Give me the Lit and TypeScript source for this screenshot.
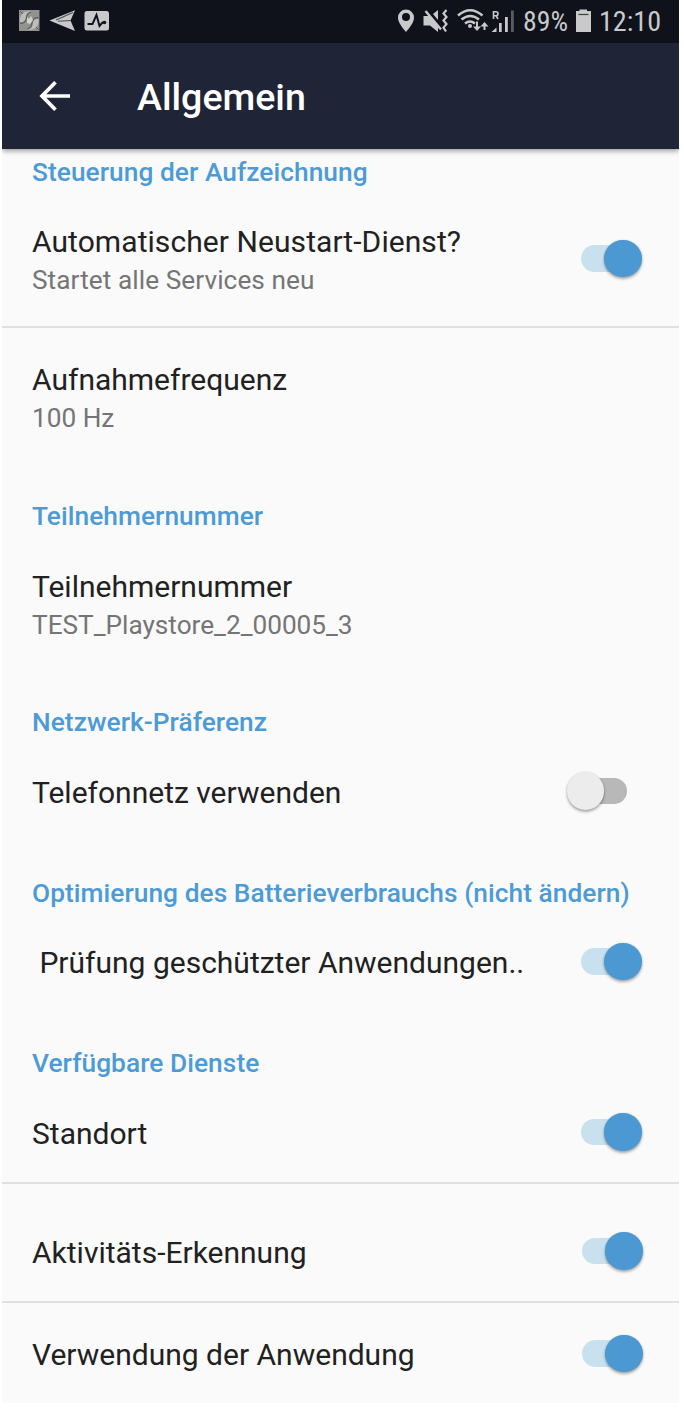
import { LitElement, html, css, svg, nothing } from 'lit';
import { customElement, property } from 'lit/decorators.js';

@customElement('toggle-switch')
class ToggleSwitch extends LitElement {
  @property({ type: Boolean, reflect: true }) on = false;
  static styles = css`
    :host { display: flex; align-items: center; flex: none; height: 38px; }
    .track { width: 46px; height: 26.6px; border-radius: 14px; background: #c9e1ef; }
    .thumb { width: 37.6px; height: 37.6px; border-radius: 50%; background: #4b98d2; margin-left: -23px;
      box-shadow: 0 2px 3px rgba(0,0,0,.32), 0 0 2px rgba(0,0,0,.12); z-index: 1; }
    :host(:not([on])) { flex-direction: row-reverse; margin-right: 14.5px; }
    :host(:not([on])) .track { background: #b8b8b8; }
    :host(:not([on])) .thumb { background: #ececec; margin: 0 -23px 0 0; }
  `;
  render() {
    return html`<div class="track"></div><div class="thumb"></div>`;
  }
}

@customElement('pref-row')
class PrefRow extends LitElement {
  @property() label = '';
  @property() summary = '';
  @property() toggle = '';
  static styles = css`
    :host { display: flex; align-items: center; justify-content: space-between; box-sizing: border-box;
      height: 94px; padding: 0 37.3px 0 30px; }
    .title { font-size: 30px; line-height: 38px; color: #212121; white-space: pre; }
    .summary { font-size: 26.2px; line-height: 38px; color: #757575; white-space: pre; }
    toggle-switch { margin-bottom: 3px; }
    .text:has(.summary) + toggle-switch { margin-bottom: 5px; }
  `;
  render() {
    return html`
      <div class="text">
        <div class="title">${this.label}</div>
        ${this.summary ? html`<div class="summary">${this.summary}</div>` : nothing}
      </div>
      ${this.toggle ? html`<toggle-switch ?on=${this.toggle === 'on'}></toggle-switch>` : nothing}
    `;
  }
}

@customElement('status-bar')
class StatusBar extends LitElement {
  static styles = css`
    :host { display: flex; height: 43px; background: #0f121a; color: #c9c9cb; }
    svg { display: block; width: 677px; height: 43px; }
    text { font-family: "Roboto Condensed", Roboto, sans-serif; font-size: 28px; fill: #c9c9cb; }
  `;
  render() {
    return html`<svg viewBox="2 0 677 43" fill="#c9c9cb">
      ${svg`
      <rect x="19" y="10" width="20.500" height="21" fill="#92928f"/>
      <path d="M20 22c-1-7 4-12 11-10.500c-4 1-5 3-5 6c0 3-3 5-6 4.500zM38.500 19c1 7-4 12-11 10.500c4-1 5-3 5-6c0-3 3-5 6-4.500z" fill="#bdbdb9"/>
      <path d="M20 23c3 1 6-1 6.500-5c0-3 1.500-5 4.500-6M38.500 18c-3-1-6 1-6.500 5c0 3-1.500 5-4.500 6" fill="none" stroke="#5a5a58" stroke-width="1.200"/>
      <path d="M27 17l2 2 2-3 2 4-3 4-3-1z" fill="#d2d2cd"/>
      <path d="M20 11l3 3M36 27l3 3" stroke="#62625f"/>
      <path d="M49.500 20.500L75 10.200L70.500 20.500L75 31Z"/>
      <path d="M56 20L73 12.500M58 21.300L71 20.500" stroke="#4a4c52" stroke-width="1.100"/>
      <rect x="84.500" y="11" width="24.500" height="19.500" rx="2.500"/>
      <path d="M87.500 24H92.500L96.500 15L99.500 26L102.500 22.500H104.500" fill="none" stroke="#11141b" stroke-width="2"/>
      <circle cx="104.500" cy="22.500" r="1.800" fill="#11141b"/>
      <path fill-rule="evenodd" d="M406 9.500a8 8 0 0 1 8 8.200c0 5-5 10.500-8 14.300c-3-3.800-8-9.300-8-14.300a8 8 0 0 1 8-8.200zM406 13a4 4 0 1 0 0 8a4 4 0 0 0 0-8z"/>
      <path d="M423.500 16H430L438 25V32L430 25.500H423.500ZM433 14L438 10V20Z"/>
      <path d="M425.500 11L441 29.500" stroke="#c9c9cb" stroke-width="2.400"/>
      <path d="M446.500 10l-3 3.500l3 3.500l-3 3.500l3 3.500l-3 3.500l2.500 4" fill="none" stroke="#c9c9cb" stroke-width="2.200"/>
      <g fill="none" stroke="#c9c9cb" stroke-width="2.500">
        <path d="M458 15.500q12.200-10.500 24.500 0M461.500 19.500q8.700-7 17.500 0M465 23.500q5-4 10 0"/>
        <path d="M477 21.500v7M484.500 30v-6.500" stroke-width="2"/>
      </g>
      <circle cx="470" cy="26" r="2"/>
      <path d="M473 26.500h8l-4 4.500zM480.500 26.500h8l-4-4.500z"/>
      <path d="M493.500 19V11.700H496a2 2 0 0 1 0 4H493.500M496 15.700L498 19" fill="none" stroke="#c9c9cb" stroke-width="1.600"/>
      <path d="M491.500 32L496.500 27.500V32ZM499 23h2.700v9H499ZM505 17h2.800v15H505Z"/>
      <path d="M511 10.500h2.800V32H511Z" fill="#5a5c62"/>
      <path d="M579.500 11V9.500h7.500V11h4V32H576V11Z"/>
      <path d="M578.500 14.500H588.500" stroke="#3b3d43" stroke-width="1.200"/>
      <text x="523" y="31" textLength="45" lengthAdjust="spacingAndGlyphs">89%</text>
      <text x="599" y="31" textLength="62" lengthAdjust="spacingAndGlyphs">12:10</text>`}
    </svg>`;
  }
}

@customElement('app-root')
class AppRoot extends LitElement {
  static styles = css`
    :host { display: block; height: 1408px; background: #fff; overflow: hidden; font-family: Roboto, sans-serif; }
    .screen { width: 677px; height: 1403px; margin-left: 2px; background: #fafafa; display: flex; flex-direction: column; overflow: hidden; }
    .screen > * { flex-shrink: 0; }
    header { height: 106px; background: #202437; display: flex; align-items: center; gap: 66px; padding-left: 37px;
      box-sizing: border-box; z-index: 1; box-shadow: 0 2px 5px rgba(0,0,0,.38); }
    header svg { width: 32px; height: 32px; }
    h1 { margin: 2px 0 0; color: #fff; font-size: 37.6px; line-height: 44px; font-weight: 500; }
    h2 { margin: 0; padding-left: 30px; height: 46px; line-height: 46px; font-size: 26.3px; letter-spacing: .05px; font-weight: 500; color: #4d9bd6; white-space: nowrap; }
    section { margin-bottom: 30px; }
    section.wide { margin-bottom: 27px; }
    .double { height: 133px; }
    .first { height: 131px; padding-top: 1px; letter-spacing: .07px; }
    .frequency { height: 142px; }
    .cellular { height: 95px; }
    .recording { margin-bottom: 23px; }
    section.services { margin: 0; }
    .location { height: 96px; padding-bottom: 1px; }
    .activity { height: 117px; padding-top: 20px; padding-right: 36.3px; }
    .usage { height: 104px; padding-right: 36.3px; }
    .line { height: 2px; background: #e0e0e0; }
  `;
  render() {
    return html`<div class="screen">
      <status-bar></status-bar>
      <header>
        <svg viewBox="0 0 32 32" fill="none" stroke="#fff" stroke-width="3.700"><path d="M31 16H4M16.500 2.300L3 16L16.500 29.700"/></svg>
        <h1>Allgemein</h1>
      </header>
      <section class="recording">
        <h2>Steuerung der Aufzeichnung</h2>
        <pref-row class="first" label="Automatischer Neustart-Dienst?" summary="Startet alle Services neu" toggle="on"></pref-row>
        <div class="line"></div>
        <pref-row class="frequency" label="Aufnahmefrequenz" summary="100 Hz"></pref-row>
      </section>
      <section class="wide">
        <h2>Teilnehmernummer</h2>
        <pref-row class="double" label="Teilnehmernummer" summary="TEST_Playstore_2_00005_3"></pref-row>
      </section>
      <section>
        <h2>Netzwerk-Präferenz</h2>
        <pref-row class="cellular" label="Telefonnetz verwenden" toggle="off"></pref-row>
      </section>
      <section>
        <h2>Optimierung des Batterieverbrauchs (nicht ändern)</h2>
        <pref-row label=" Prüfung geschützter Anwendungen.." toggle="on"></pref-row>
      </section>
      <section class="services">
        <h2>Verfügbare Dienste</h2>
        <pref-row class="location" label="Standort" toggle="on"></pref-row>
        <div class="line"></div>
        <pref-row class="activity" label="Aktivitäts-Erkennung" toggle="on"></pref-row>
        <div class="line"></div>
        <pref-row class="usage" label="Verwendung der Anwendung" toggle="on"></pref-row>
      </section>
    </div>`;
  }
}
